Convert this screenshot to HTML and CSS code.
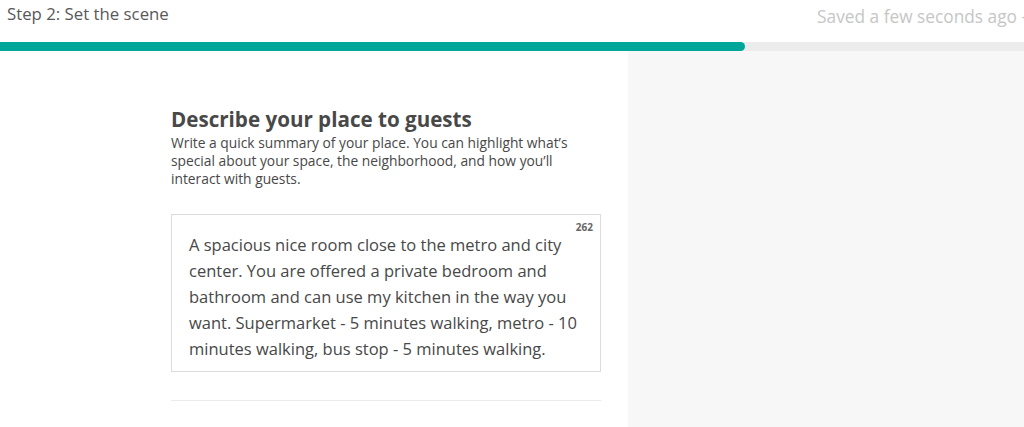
FILE: index.html
```html
<!DOCTYPE html>
<html lang="en">
<head>
<meta charset="utf-8">
<title>Step 2: Set the scene</title>
<link rel="stylesheet" href="styles.css">
</head>
<body>
<header class="topbar">
  <div class="step">Step 2: Set the scene</div>
  <div class="saved">Saved a few seconds ago -</div>
</header>
<div class="progress"><div class="progress-fill" style="width:745px"></div></div>
<div class="page">
  <main class="main">
    <div class="content">
      <h1 class="title">Describe your place to guests</h1>
      <p class="desc">Write a quick summary of your place. You can highlight what’s special about your space, the neighborhood, and how you’ll interact with guests.</p>
      <div class="textbox">
        <span class="counter">262</span>
        <p class="textbox-text">A spacious nice room close to the metro and city center. You are offered a private bedroom and bathroom and can use my kitchen in the way you want. Supermarket - 5 minutes walking, metro - 10 minutes walking, bus stop - 5 minutes walking.</p>
      </div>
      <hr class="divider">
    </div>
  </main>
  <aside class="side"></aside>
</div>
</body>
</html>
```
FILE: styles.css
```css
html, body {
  margin: 0;
  padding: 0;
  background: #fff;
  font-family: "Open Sans", "Lato", sans-serif;
  color: #484848;
  overflow: hidden;
}
.topbar {
  height: 42px;
  display: flex;
  justify-content: space-between;
  align-items: flex-start;
  padding: 2px 0 0 7px;
  box-sizing: border-box;
  white-space: nowrap;
}
.step {
  font-size: 16.8px;
  color: #585858;
}
.saved {
  font-size: 17.3px;
  color: #c6c6c6;
  margin-top: 3px;
  margin-right: -3px;
}
.progress {
  height: 9px;
  background: #ececec;
}
.progress-fill {
  height: 100%;
  background: #00a699;
  border-radius: 0 5px 5px 0;
}
.page {
  display: flex;
  height: 376px;
}
.main {
  width: 628px;
  flex: none;
}
.side {
  flex: 1;
  background: #f7f7f7;
}
.content {
  margin-left: 171px;
  width: 430px;
  padding-top: 54px;
}
.title {
  margin: 0;
  font-size: 20.6px;
  font-weight: 700;
  color: #484848;
  line-height: 28px;
}
.desc {
  margin: 1px 0 0;
  max-width: 412px;
  font-size: 13.8px;
  line-height: 18px;
  color: #484848;
}
.textbox {
  position: relative;
  margin-top: 26px;
  border: 1px solid #dcdcdc;
  height: 158px;
  box-sizing: border-box;
  padding: 17px 17px 0;
}
.counter {
  position: absolute;
  top: 5px;
  right: 7px;
  font-size: 10px;
  font-weight: 700;
  color: #666;
}
.textbox-text {
  margin: 0;
  font-size: 16.5px;
  line-height: 26px;
  color: #484848;
}
.divider {
  margin: 28px 0 0;
  border: 0;
  border-top: 1px solid #ebebeb;
}
```
